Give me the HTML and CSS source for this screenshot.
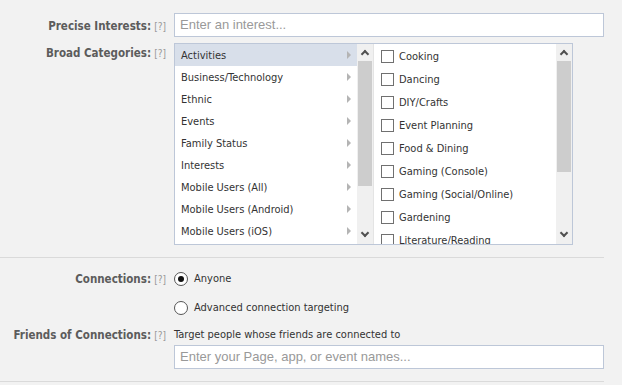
FILE: index.html
```html
<!DOCTYPE html>
<html lang="en">
<head>
    <meta charset="UTF-8">
    <title>Targeting</title>
    <link rel="stylesheet" href="styles.css">
</head>
<body>
    <div class="section">
        <div class="row row-input">
            <div class="label"><b>Precise Interests:</b> <span class="help">[?]</span></div>
            <div class="field">
                <div class="text-input">Enter an interest...</div>
            </div>
        </div>
        <div class="row row-box">
            <div class="label"><b>Broad Categories:</b> <span class="help">[?]</span></div>
            <div class="field">
                <div class="picker">
                    <div class="list list-cats">
                        <div class="items">
                            <div class="item active">Activities<span class="arrow"></span></div>
                            <div class="item">Business/Technology<span class="arrow"></span></div>
                            <div class="item">Ethnic<span class="arrow"></span></div>
                            <div class="item">Events<span class="arrow"></span></div>
                            <div class="item">Family Status<span class="arrow"></span></div>
                            <div class="item">Interests<span class="arrow"></span></div>
                            <div class="item">Mobile Users (All)<span class="arrow"></span></div>
                            <div class="item">Mobile Users (Android)<span class="arrow"></span></div>
                            <div class="item">Mobile Users (iOS)<span class="arrow"></span></div>
                        </div>
                        <div class="scrollbar">
                            <span class="btn up"></span>
                            <span class="thumb thumb-cats"></span>
                            <span class="btn down"></span>
                        </div>
                    </div>
                    <div class="list list-subs">
                        <div class="items">
                            <div class="check-item"><span class="box"></span>Cooking</div>
                            <div class="check-item"><span class="box"></span>Dancing</div>
                            <div class="check-item"><span class="box"></span>DIY/Crafts</div>
                            <div class="check-item"><span class="box"></span>Event Planning</div>
                            <div class="check-item"><span class="box"></span>Food &amp; Dining</div>
                            <div class="check-item"><span class="box"></span>Gaming (Console)</div>
                            <div class="check-item"><span class="box"></span>Gaming (Social/Online)</div>
                            <div class="check-item"><span class="box"></span>Gardening</div>
                            <div class="check-item"><span class="box"></span>Literature/Reading</div>
                        </div>
                        <div class="scrollbar">
                            <span class="btn up"></span>
                            <span class="thumb thumb-subs"></span>
                            <span class="btn down"></span>
                        </div>
                    </div>
                </div>
            </div>
        </div>
    </div>
    <div class="section section-conn">
        <div class="row row-radio">
            <div class="label"><b>Connections:</b> <span class="help">[?]</span></div>
            <div class="field">
                <div class="radio-item"><span class="radio checked"></span>Anyone</div>
            </div>
        </div>
        <div class="row row-radio">
            <div class="label"></div>
            <div class="field">
                <div class="radio-item"><span class="radio"></span>Advanced connection targeting</div>
            </div>
        </div>
        <div class="row row-friends">
            <div class="label"><b>Friends of Connections:</b> <span class="help">[?]</span></div>
            <div class="field">
                <div class="hint">Target people whose friends are connected to</div>
                <div class="text-input">Enter your Page, app, or event names...</div>
            </div>
        </div>
    </div>
</body>
</html>
```

FILE: styles.css
```css
body {
    margin: 0;
    background-color: #f2f2f2;
    font-family: "DejaVu Sans Condensed", "DejaVu Sans", Tahoma, sans-serif;
    font-size: 11px;
    color: #333;
}
.section {
    width: 604px;
    padding: 13px 0 12px;
    border-bottom: 1px solid #dadada;
}
.section-conn {
    padding: 6px 0 12px;
}
.row {
    display: flex;
}
.label {
    width: 166px;
    flex-shrink: 0;
    margin-right: 8px;
    text-align: right;
    color: #666;
    white-space: nowrap;
}
.label b {
    color: #5c5c5c;
    font-size: 11.5px;
}
.help {
    color: #999;
    font-size: 10px;
}
.field {
    flex: 1;
}
.row-input .label {
    padding-top: 6px;
}
.row-input {
    margin-bottom: 6px;
}
.row-box .label {
    padding-top: 3px;
}
.text-input {
    height: 22px;
    line-height: 22px;
    border: 1px solid #bdc7d8;
    background-color: #fff;
    padding: 0 5px;
    font-family: "Liberation Sans", Arial, sans-serif;
    font-size: 13px;
    color: #999;
}
.picker {
    display: flex;
    width: 397px;
    height: 200px;
    border: 1px solid #bdc7d8;
    background-color: #fff;
    overflow: hidden;
}
.list {
    display: flex;
    overflow: hidden;
}
.list-cats {
    width: 198px;
    border-right: 1px solid #e4e4e4;
}
.list-subs {
    flex: 1;
}
.list-subs .items {
    padding-top: 1px;
}
.items {
    flex: 1;
    overflow: hidden;
}
.item {
    display: flex;
    justify-content: space-between;
    align-items: center;
    height: 22px;
    padding: 0 6px 0 6px;
}
.item.active {
    background-color: #d8dfea;
}
.arrow {
    width: 0;
    height: 0;
    border-top: 4px solid transparent;
    border-bottom: 4px solid transparent;
    border-left: 4px solid #b4b4b4;
}
.scrollbar {
    width: 16px;
    display: flex;
    flex-direction: column;
    background-color: #f0f0f0;
}
.btn {
    height: 17px;
    position: relative;
}
.btn::after {
    content: "";
    position: absolute;
    left: 5px;
    width: 4px;
    height: 4px;
    border-left: 2px solid #505050;
    border-top: 2px solid #505050;
}
.btn.up::after {
    top: 7px;
    transform: rotate(45deg);
}
.btn.down {
    margin-top: auto;
}
.btn.down::after {
    top: 3px;
    transform: rotate(225deg);
}
.thumb {
    background-color: #cdcdcd;
    margin: 0 1px;
}
.thumb-cats {
    height: 125px;
}
.thumb-subs {
    height: 111px;
}
.check-item {
    display: flex;
    align-items: center;
    height: 23px;
    padding-left: 7px;
}
.box {
    width: 11px;
    height: 11px;
    border: 1px solid #707070;
    background-color: #fff;
    margin-right: 5px;
}
.row-radio {
    height: 29px;
    align-items: center;
}
.radio-item {
    display: flex;
    align-items: center;
}
.radio {
    width: 12px;
    height: 12px;
    border: 1px solid #555;
    border-radius: 50%;
    background-color: #fff;
    margin-right: 6px;
    display: flex;
    align-items: center;
    justify-content: center;
}
.radio.checked::after {
    content: "";
    width: 6px;
    height: 6px;
    border-radius: 50%;
    background-color: #111;
}
.row-friends {
    margin-top: 6px;
}
.hint {
    margin-bottom: 4px;
}
```
